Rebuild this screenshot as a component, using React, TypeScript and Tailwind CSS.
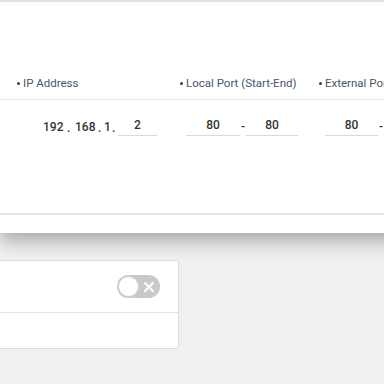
import React from "react";

const font = { fontFamily: "Roboto, 'Liberation Sans', sans-serif" };

function Head({ label, className }: { label: string; className?: string }) {
  return (
    <div className={"flex items-center gap-[3px] text-[11.5px] text-[#46566a] " + (className ?? "")}>
      <span className="w-[3px] h-[3px] rounded-full bg-[#34404f]" />
      <span>{label}</span>
    </div>
  );
}

function Field({ value, w }: { value: string; w: string }) {
  return (
    <div className={"border-b border-[#d9d9d9] text-center leading-[18px] pb-[1px] " + w}>{value}</div>
  );
}

export default function App() {
  return (
    <div style={font} className="w-[384px] h-[384px] overflow-hidden bg-[#f0f0f0]">
      {/* 转发规则面板 */}
      <div className="w-[420px] h-[233px] bg-white border-t-2 border-[#e3e3e3] shadow-[0_8px_18px_rgba(0,0,0,0.3)]">
        <div className="h-[98px] flex items-end pb-[7px] border-b border-[#e5e5e5]">
          <Head label="IP Address" className="w-[180px] pl-[17px]" />
          <Head label="Local Port (Start-End)" className="w-[139px]" />
          <Head label="External Port" />
        </div>
        <div className="h-[115px] border-b-2 border-[#e6e6e6] pt-[16px] flex items-start text-[12px] font-medium text-[#333]">
          <div className="w-[178px] flex items-end pl-[43px] leading-[18px]">
            <span className="w-[20px] text-center">192</span>
            <span className="w-[12px] pl-[4px] translate-y-[1px]">.</span>
            <span className="w-[20px] text-center">168</span>
            <span className="w-[9px] pl-[3px] translate-y-[1px]">.</span>
            <span className="w-[5px] text-center">1</span>
            <span className="w-[9px] pl-[3px] translate-y-[1px]">.</span>
            <Field value="2" w="w-[39px]" />
          </div>
          <div className="w-[140px] flex items-end pl-[8px]">
            <Field value="80" w="w-[54px]" />
            <span className="w-[6px] text-center leading-[18px]">-</span>
            <Field value="80" w="w-[52px]" />
          </div>
          <div className="flex items-end pl-[7px]">
            <Field value="80" w="w-[53px]" />
            <span className="w-[6px] text-center leading-[18px]">-</span>
          </div>
        </div>
      </div>

      {/* 开关卡片 */}
      <div className="mt-[27px] ml-[-10px] w-[189px] h-[89px] bg-white border border-[#dcdcdc] rounded-[3px] flex flex-col">
        <div className="h-[52px] flex items-center justify-end pr-[18px] border-b border-[#e3e3e3]">
          <div className="w-[43px] h-[23px] rounded-full bg-[#c9c9c9] flex items-center p-[1px]">
            <div className="w-[21px] h-[21px] rounded-full bg-white border border-[#d0d0d0]" />
            <svg width="12" height="12" viewBox="0 0 12 12" className="ml-[4px]">
              <path d="M2 2 L10 10 M10 2 L2 10" stroke="white" strokeWidth="2" strokeLinecap="round" />
            </svg>
          </div>
        </div>
        <div className="flex-1" />
      </div>
    </div>
  );
}
